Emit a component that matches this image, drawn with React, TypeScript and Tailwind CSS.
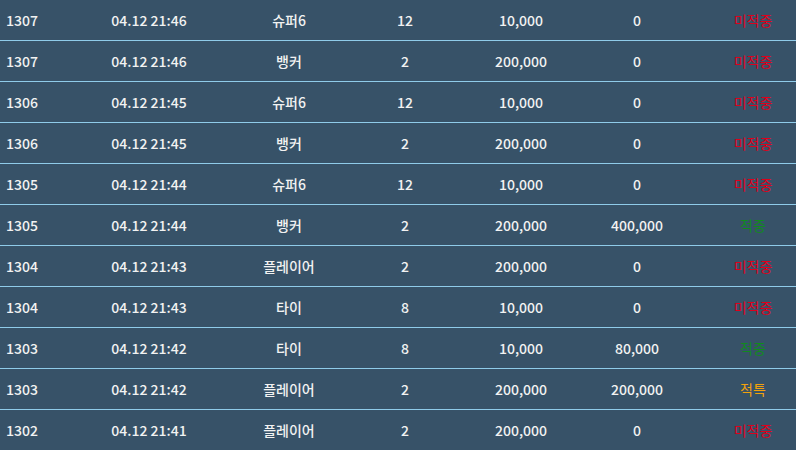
import React from 'react'

type Row = {
	round: string
	time: string
	pick: string
	odds: string
	bet: string
	win: string
	result: '미적중' | '적중' | '적특'
}

const rows: Row[] = [
	{ round: '1307', time: '04.12 21:46', pick: '슈퍼6', odds: '12', bet: '10,000', win: '0', result: '미적중' },
	{ round: '1307', time: '04.12 21:46', pick: '뱅커', odds: '2', bet: '200,000', win: '0', result: '미적중' },
	{ round: '1306', time: '04.12 21:45', pick: '슈퍼6', odds: '12', bet: '10,000', win: '0', result: '미적중' },
	{ round: '1306', time: '04.12 21:45', pick: '뱅커', odds: '2', bet: '200,000', win: '0', result: '미적중' },
	{ round: '1305', time: '04.12 21:44', pick: '슈퍼6', odds: '12', bet: '10,000', win: '0', result: '미적중' },
	{ round: '1305', time: '04.12 21:44', pick: '뱅커', odds: '2', bet: '200,000', win: '400,000', result: '적중' },
	{ round: '1304', time: '04.12 21:43', pick: '플레이어', odds: '2', bet: '200,000', win: '0', result: '미적중' },
	{ round: '1304', time: '04.12 21:43', pick: '타이', odds: '8', bet: '10,000', win: '0', result: '미적중' },
	{ round: '1303', time: '04.12 21:42', pick: '타이', odds: '8', bet: '10,000', win: '80,000', result: '적중' },
	{ round: '1303', time: '04.12 21:42', pick: '플레이어', odds: '2', bet: '200,000', win: '200,000', result: '적특' },
	{ round: '1302', time: '04.12 21:41', pick: '플레이어', odds: '2', bet: '200,000', win: '0', result: '미적중' },
]

const resultColor = {
	미적중: 'text-[#e0001b]',
	적중: 'text-[#118a1e]',
	적특: 'text-[#f2a20c]',
}

const App: React.FC = () => {
	return (
		<div className="h-[450px] w-[796px] overflow-hidden bg-[#375268] font-['Noto_Sans_CJK_KR','Noto_Sans',sans-serif] text-[14px] text-[#f2f2f2]">
			<div className="w-[811px]">
				{rows.map((r, i) => (
					<div
						key={i}
						className="grid h-[41px] grid-cols-[67px_164px_116px_116px_116px_116px_116px] items-center border-b border-[#8fcbe9] font-medium"
					>
						<div className="pl-[6px]">{r.round}</div>
						<div className="text-center">{r.time}</div>
						<div className="text-center">{r.pick}</div>
						<div className="text-center">{r.odds}</div>
						<div className="text-center">{r.bet}</div>
						<div className="text-center">{r.win}</div>
						<div className={`text-center font-normal ${resultColor[r.result]}`}>{r.result}</div>
					</div>
				))}
			</div>
		</div>
	)
}

export default App
